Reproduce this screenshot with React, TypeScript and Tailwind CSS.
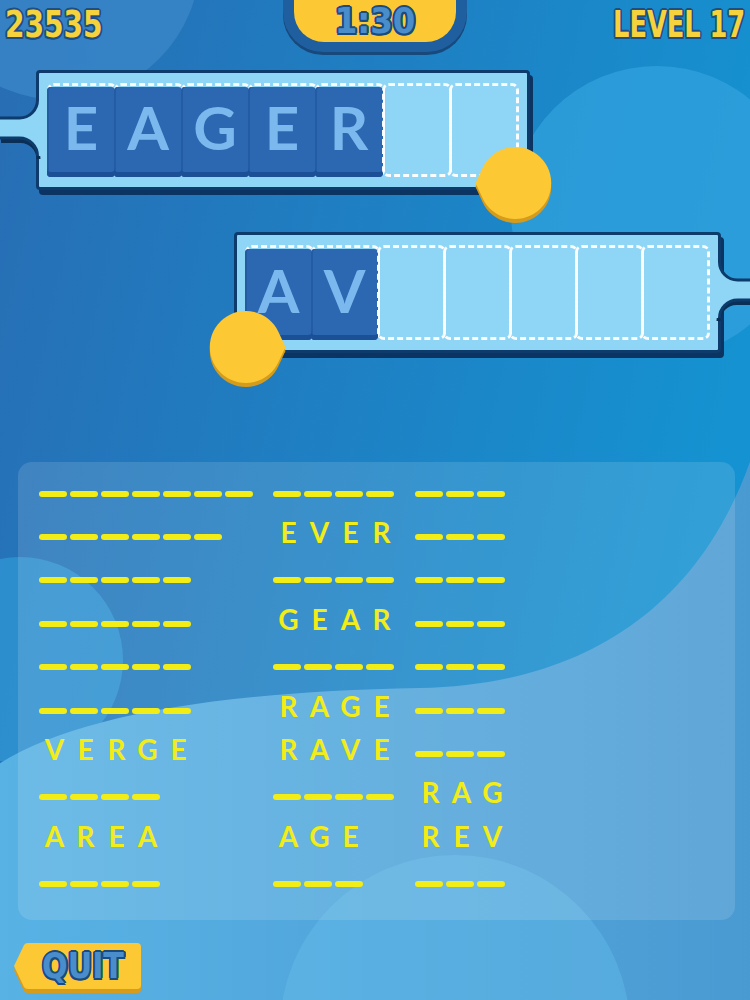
import React from "react";

type Entry = number | string;

const COLS: { width: string; items: Entry[] }[] = [
  { width: "w-[234px]", items: [7, 6, 5, 5, 5, 5, "VERGE", 4, "AREA", 4] },
  { width: "w-[142px]", items: [4, "EVER", 4, "GEAR", 4, "RAGE", "RAVE", 4, "AGE", 3] },
  { width: "w-[120px]", items: [3, 3, 3, 3, 3, 3, 3, "RAG", "REV", 3] },
];

function Background() {
  return (
    <svg className="absolute inset-0" width="750" height="1000" viewBox="0 0 750 1000">
      <defs>
        <linearGradient id="bg" x1="0" y1="0" x2="1" y2="0.3">
          <stop offset="0" stopColor="#286db4" />
          <stop offset="1" stopColor="#1592d1" />
        </linearGradient>
        <linearGradient id="low" x1="0" y1="0" x2="1" y2="0">
          <stop offset="0" stopColor="#58b2e4" />
          <stop offset="1" stopColor="#4a9ad2" />
        </linearGradient>
      </defs>
      <rect width="750" height="1000" fill="url(#bg)" />
      <circle cx="60" cy="-40" r="140" fill="#3a86c8" opacity="0.8" />
      <circle cx="657" cy="212" r="146" fill="#30a0dc" opacity="0.8" />
      <circle cx="20" cy="660" r="103" fill="#33a0dc" opacity="0.6" />
      <path
        d="M-10 770 C60 720 200 692 420 688 C580 685 710 610 760 430 L760 1010 L-10 1010 Z"
        fill="url(#low)"
      />
      <circle cx="455" cy="1030" r="175" fill="#66bdeb" opacity="0.4" />
    </svg>
  );
}

function Handle({ side }: { side: "left" | "right" }) {
  const pos = side === "left" ? "left-[-39px]" : "right-[-39px] -scale-x-100";
  return (
    <svg
      className={`absolute top-[27px] overflow-visible ${pos}`}
      width="41"
      height="56"
      viewBox="0 0 41 56"
    >
      <path
        d="M0 38 H19.5 A18 18 0 0 1 37.5 56"
        transform="translate(1 3)"
        fill="none"
        stroke="#0a2f57"
        strokeWidth="4"
      />
      <path d="M0 18 H19.5 A18 18 0 0 0 37.5 0 H41 V56 H37.5 A18 18 0 0 0 19.5 38 H0 Z" fill="#8fd5f6" />
      <path
        d="M0 18 H19.5 A18 18 0 0 0 37.5 0 M0 38 H19.5 A18 18 0 0 1 37.5 56"
        fill="none"
        stroke="#0d3b6b"
        strokeWidth="3"
      />
    </svg>
  );
}

function Drop({ className }: { className: string }) {
  const d = "M6 43 Q5 43 6.5 41 L12.5 28 A36 36 0 1 1 12.5 58 L6.5 45 Q5 43 6 43 Z";
  return (
    <svg className={`absolute ${className}`} width="90" height="90" viewBox="0 0 90 90">
      <path d={d} transform="translate(0 4)" fill="#d59b1b" />
      <path d={d} fill="#fcc833" />
    </svg>
  );
}

function Tray({
  word,
  slot,
  handle,
  drop,
  className,
}: {
  word: string;
  slot: string;
  handle: "left" | "right";
  drop: string;
  className: string;
}) {
  const cells = Array.from({ length: 7 }, (_, i) => word[i] ?? "");
  return (
    <div
      className={`relative w-fit rounded-[4px] border-[3px] border-[#0d3b6b] bg-[#8fd5f6] px-[8px] py-[10px] shadow-[3px_5px_0_#0b3462] ${className}`}
    >
      <Handle side={handle} />
      <div className="flex">
        {cells.map((ch, i) => (
          <div
            key={i}
            className={`relative ${slot} rounded-[7px] border-[3px] border-dashed border-white/95 ${i > 0 ? "-ml-[3px]" : ""}`}
          >
            {ch && (
              <div className="absolute top-[1px] bottom-[-3px] left-[-3px] right-[-1px] flex items-center justify-center rounded-[4px] bg-[#2c67b1] pb-[10px] text-[60px] font-bold leading-none text-[#7ab8ee] shadow-[inset_0_-5px_0_#1c5096,inset_2px_0_0_#245ca3] [font-family:Lato,sans-serif]">
                {ch}
              </div>
            )}
          </div>
        ))}
      </div>
      <Drop className={drop} />
    </div>
  );
}

function Cell({ entry }: { entry: Entry }) {
  return (
    <div className="flex h-[43.4px] items-center">
      {typeof entry === "number" ? (
        <div className="flex gap-[3px]">
          {Array.from({ length: entry }, (_, i) => (
            <div key={i} className="h-[6px] w-[28px] rounded-full bg-[#f2ec17]" />
          ))}
        </div>
      ) : (
        <div className="mb-[10px] flex text-[28px] font-bold leading-none text-[#f2ec17] [font-family:Lato,sans-serif]">
          {entry.split("").map((ch, i) => (
            <span key={i} className="w-[31px] text-center">
              {ch}
            </span>
          ))}
        </div>
      )}
    </div>
  );
}

export default function App() {
  return (
    <div className="relative h-[1000px] w-[750px] overflow-hidden">
      <Background />
      <div className="relative flex flex-col">
        {/* header */}
        <div className="grid h-[52px] grid-cols-[1fr_auto_1fr] items-start">
          <div className="flex h-[48px] items-center pl-[5px]">
            <span className="inline-block origin-left scale-x-[0.82] text-[38px] font-bold leading-none text-[#f6d23c] font-stretch-condensed [font-family:'DejaVu_Sans_Condensed','DejaVu_Sans',sans-serif] [text-shadow:2px_0_0_#1b4f85,-2px_0_0_#1b4f85,0_2px_0_#1b4f85,0_-2px_0_#1b4f85,1.5px_1.5px_0_#1b4f85,-1.5px_1.5px_0_#1b4f85,1.5px_-1.5px_0_#1b4f85,-1.5px_-1.5px_0_#1b4f85]">
              23535
            </span>
          </div>
          <div className="h-[52px] w-[184px] rounded-b-[40px] bg-[#1f5f9f] px-[11px] pb-[10px] shadow-[0_3px_0_#17497c]">
            <div className="flex h-full items-center justify-center rounded-b-[30px] bg-[#fcc833]">
              <span className="text-[36px] font-bold leading-none text-[#4a8dcb] font-stretch-condensed [font-family:'DejaVu_Sans_Condensed','DejaVu_Sans',sans-serif] [text-shadow:2px_0_0_#1a4b80,-2px_0_0_#1a4b80,0_2px_0_#1a4b80,0_-2px_0_#1a4b80,1.5px_1.5px_0_#1a4b80,-1.5px_1.5px_0_#1a4b80,1.5px_-1.5px_0_#1a4b80,-1.5px_-1.5px_0_#1a4b80]">
                1:30
              </span>
            </div>
          </div>
          <div className="flex h-[48px] items-center justify-end pr-[5px]">
            <span className="inline-block origin-right scale-x-[0.75] whitespace-nowrap text-[38px] font-bold leading-none text-[#f6d23c] font-stretch-condensed [font-family:'DejaVu_Sans_Condensed','DejaVu_Sans',sans-serif] [text-shadow:2px_0_0_#1b4f85,-2px_0_0_#1b4f85,0_2px_0_#1b4f85,0_-2px_0_#1b4f85,1.5px_1.5px_0_#1b4f85,-1.5px_1.5px_0_#1b4f85,1.5px_-1.5px_0_#1b4f85,-1.5px_-1.5px_0_#1b4f85]">
              LEVEL 17
            </span>
          </div>
        </div>

        <Tray
          word="EAGER"
          slot="w-[70px] h-[94px]"
          handle="left"
          drop="left-[431px] top-[67px]"
          className="ml-[36px] mt-[18px]"
        />
        <Tray
          word="AV"
          slot="w-[69px] h-[95px]"
          handle="right"
          drop="left-[-36px] top-[69px] -scale-x-100"
          className="ml-[234px] mt-[42px]"
        />

        {/* word list */}
        <div className="ml-[18px] mt-[109px] flex h-[458px] w-[717px] rounded-[14px] bg-white/[0.125] pl-[21px] pt-[10px]">
          {COLS.map((col, ci) => (
            <div key={ci} className={`flex flex-col ${col.width}`}>
              {col.items.map((e, i) => (
                <Cell key={i} entry={e} />
              ))}
            </div>
          ))}
        </div>

        {/* quit */}
        <div className="relative ml-[12px] mt-[22px] h-[52px] w-[130px]">
          <svg className="absolute inset-0" width="130" height="52" viewBox="0 0 130 52">
            <path
              d="M2 24 L12 3 Q13 1 16 1 H125 Q129 1 129 5 V43 Q129 47 125 47 H16 Q13 47 12 45 Z"
              transform="translate(0 4)"
              fill="#d89c1c"
            />
            <path
              d="M2 24 L12 3 Q13 1 16 1 H125 Q129 1 129 5 V43 Q129 47 125 47 H16 Q13 47 12 45 Z"
              fill="#fcc833"
            />
          </svg>
          <div className="relative flex h-[48px] items-center justify-center pl-[12px]">
            <span className="inline-block scale-x-[0.93] text-[36px] font-bold leading-none text-[#4a8dcb] font-stretch-condensed [font-family:'DejaVu_Sans_Condensed','DejaVu_Sans',sans-serif] [text-shadow:2px_0_0_#1a4b80,-2px_0_0_#1a4b80,0_2px_0_#1a4b80,0_-2px_0_#1a4b80,1.5px_1.5px_0_#1a4b80,-1.5px_1.5px_0_#1a4b80,1.5px_-1.5px_0_#1a4b80,-1.5px_-1.5px_0_#1a4b80]">
              QUIT
            </span>
          </div>
        </div>
      </div>
    </div>
  );
}
